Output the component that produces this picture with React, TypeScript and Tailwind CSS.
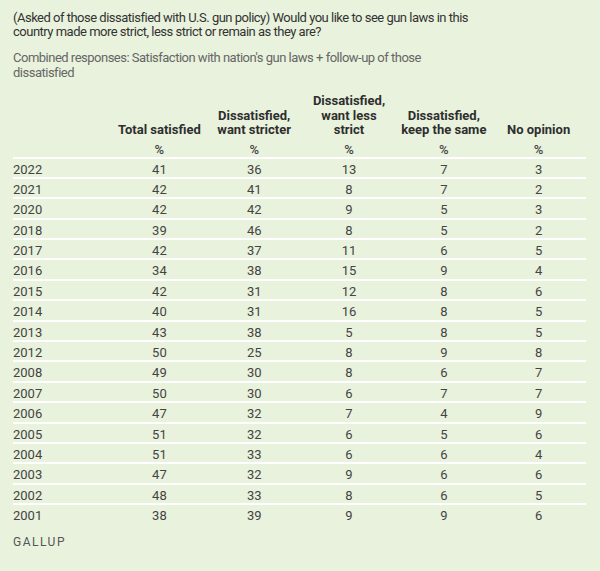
const rows: [string, number, number, number, number, number][] = [
  ['2022', 41, 36, 13, 7, 3],
  ['2021', 42, 41, 8, 7, 2],
  ['2020', 42, 42, 9, 5, 3],
  ['2018', 39, 46, 8, 5, 2],
  ['2017', 42, 37, 11, 6, 5],
  ['2016', 34, 38, 15, 9, 4],
  ['2015', 42, 31, 12, 8, 6],
  ['2014', 40, 31, 16, 8, 5],
  ['2013', 43, 38, 5, 8, 5],
  ['2012', 50, 25, 8, 9, 8],
  ['2008', 49, 30, 8, 6, 7],
  ['2007', 50, 30, 6, 7, 7],
  ['2006', 47, 32, 7, 4, 9],
  ['2005', 51, 32, 6, 5, 6],
  ['2004', 51, 33, 6, 6, 4],
  ['2003', 47, 32, 9, 6, 6],
  ['2002', 48, 33, 8, 6, 5],
  ['2001', 38, 39, 9, 9, 6],
];

const headers = [
  ['Total satisfied'],
  ['Dissatisfied,', 'want stricter'],
  ['Dissatisfied,', 'want less', 'strict'],
  ['Dissatisfied,', 'keep the same'],
  ['No opinion'],
];

export default function App() {
  return (
    <div
      className="w-[600px] h-[571px] bg-[#e9f2dd] pl-[13px] pt-[11px] text-[#333]"
      style={{ fontFamily: 'Roboto, "Liberation Sans", sans-serif' }}
    >
      <p className="text-[13px] leading-[14px] tracking-[-0.5px] w-[480px]">
        (Asked of those dissatisfied with U.S. gun policy) Would you like to see gun laws in this country made more
        strict, less strict or remain as they are?
      </p>
      <p className="mt-[12px] text-[13px] leading-[14.5px] tracking-[-0.5px] text-[#666] w-[430px]">
        Combined responses: Satisfaction with nation's gun laws + follow-up of those dissatisfied
      </p>

      <div className="w-[573px] mt-[14px]">
        {/* header */}
        <div className="grid grid-cols-[99px_repeat(5,1fr)] items-end">
          <div />
          {headers.map((h, i) => (
            <div key={i} className="text-center font-bold text-[13px] leading-[14.5px] text-[#2e2e2e]">
              {h.map((line) => (
                <div key={line}>{line}</div>
              ))}
            </div>
          ))}
        </div>
        <div className="grid grid-cols-[99px_repeat(5,1fr)] mt-[5px] h-[14px] items-start">
          <div />
          {headers.map((_, i) => (
            <div key={i} className="text-center text-[13px] font-medium leading-[14px] text-[#444]">
              %
            </div>
          ))}
        </div>

        {rows.map((r) => (
          <div
            key={r[0]}
            className="grid grid-cols-[99px_repeat(5,1fr)] h-[20.4px] border-t-2 border-white items-center text-[13px] text-[#444] pt-[1px]"
          >
            <div>{r[0]}</div>
            {r.slice(1).map((v, i) => (
              <div key={i} className="text-center">
                {v}
              </div>
            ))}
          </div>
        ))}
      </div>

      <div className="mt-[9px] text-[12px] tracking-[1.5px] text-[#555]">GALLUP</div>
    </div>
  );
}
